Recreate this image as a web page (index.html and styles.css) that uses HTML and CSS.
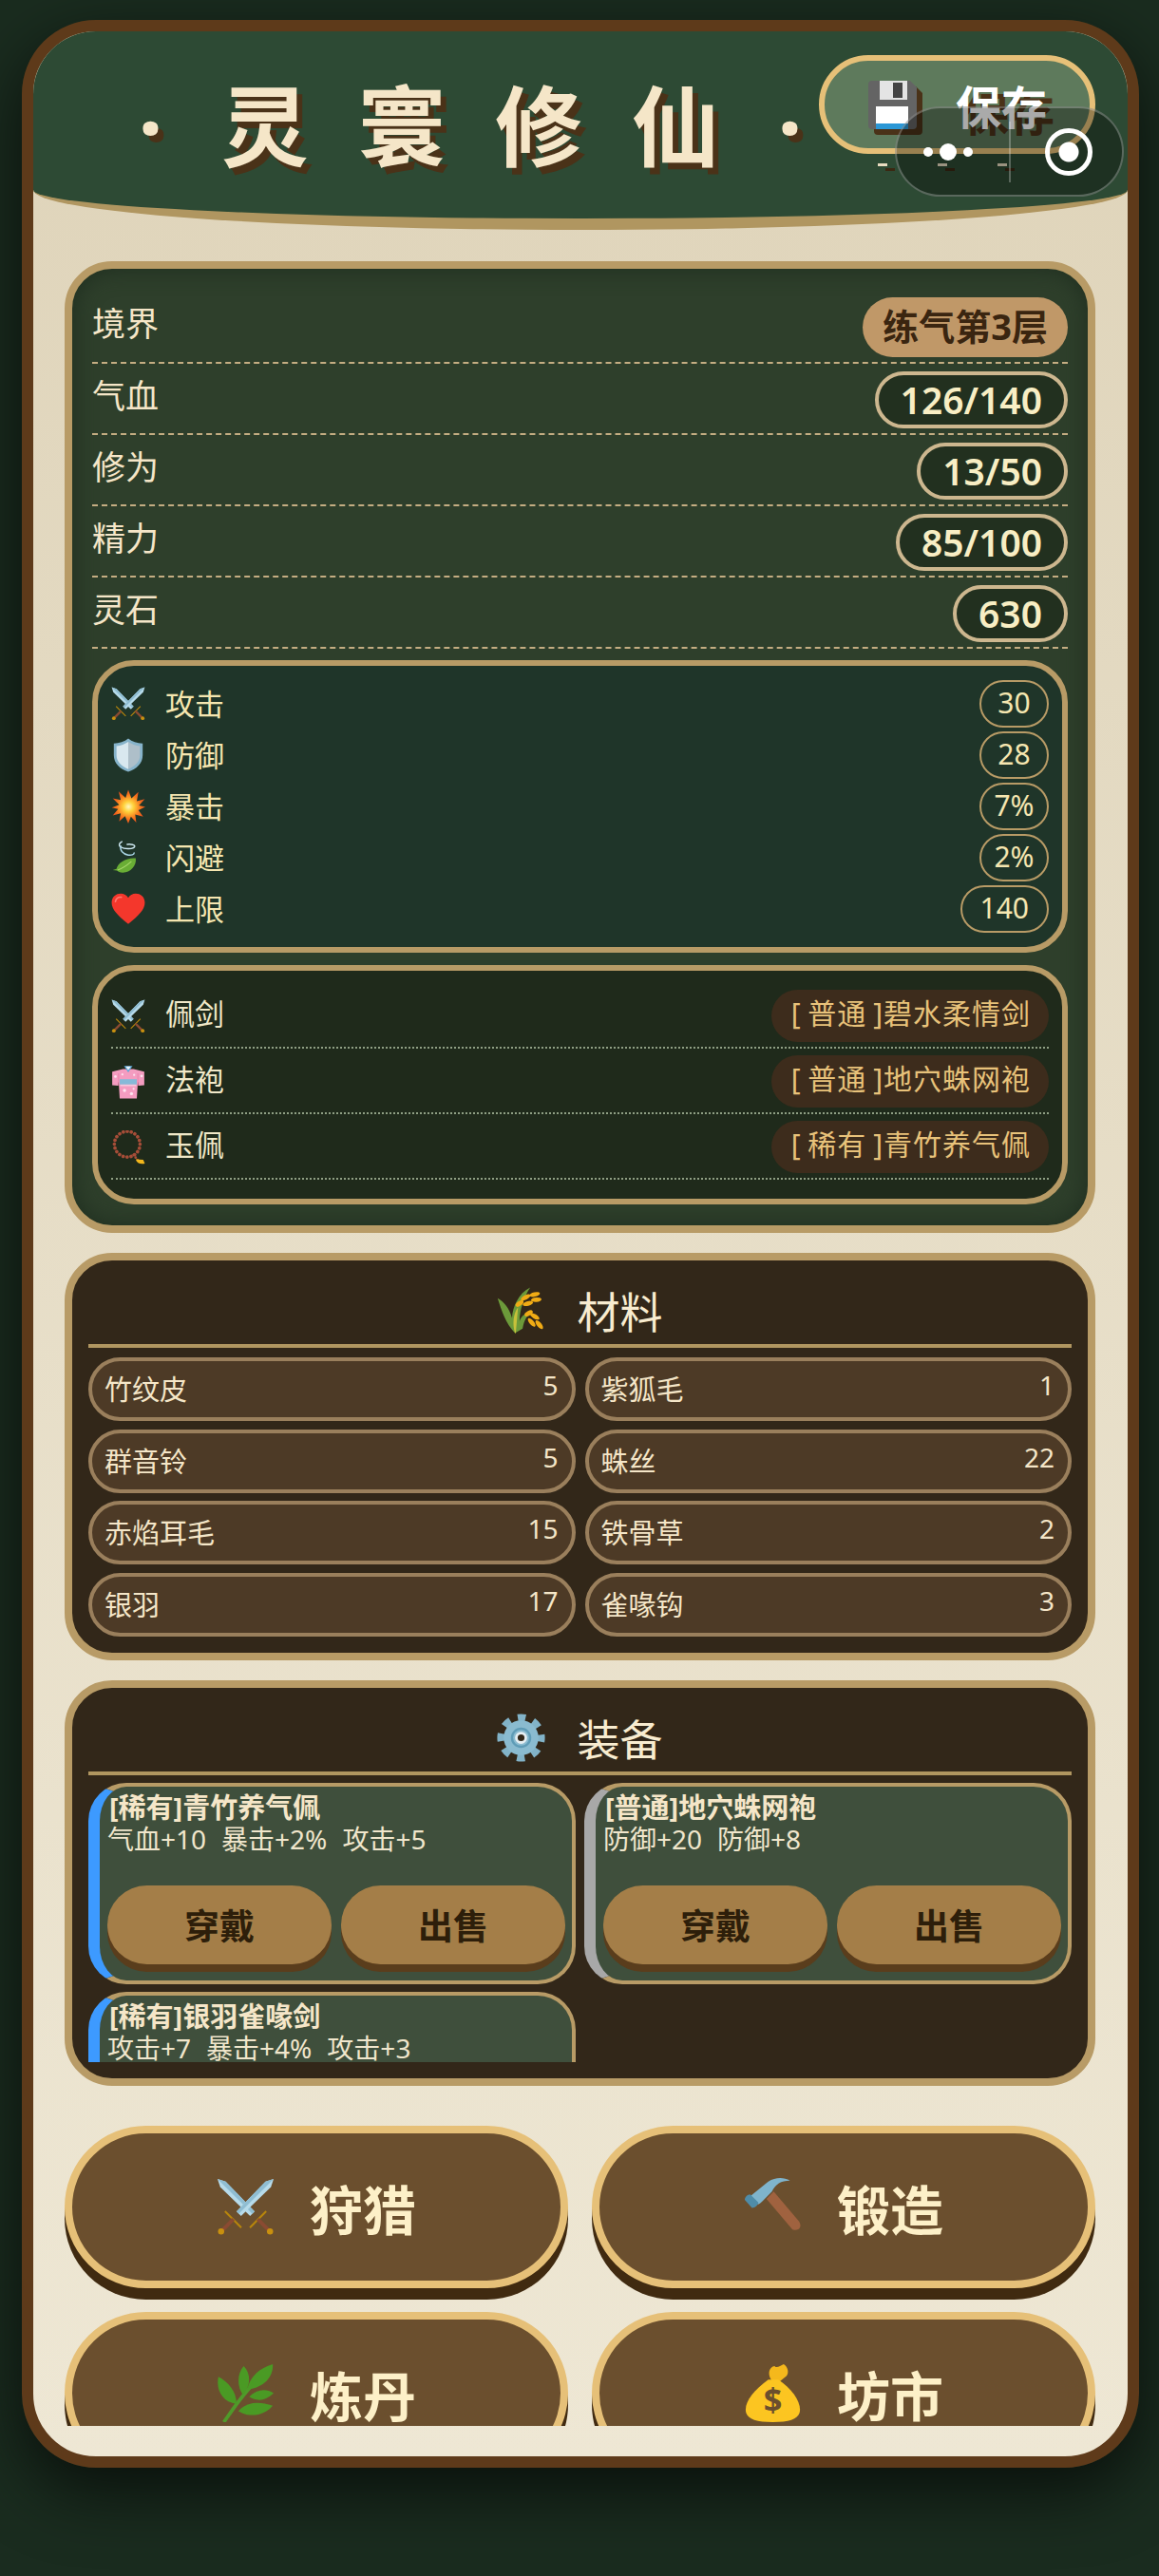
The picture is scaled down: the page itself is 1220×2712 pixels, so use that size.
FILE: index.html
```html
<!DOCTYPE html>
<html lang="zh-CN">
<head>
  <meta charset="UTF-8">
  <title>灵寰修仙</title>
  <link rel="stylesheet" href="styles.css">
</head>
<body>
  <svg class="sprites" width="0" height="0">
    <defs>
      <radialGradient id="boom">
        <stop offset="0" stop-color="#fff6c0"/>
        <stop offset=".3" stop-color="#ffd23c"/>
        <stop offset=".7" stop-color="#f7791e"/>
        <stop offset="1" stop-color="#e8501a"/>
      </radialGradient>
      <symbol id="i-swords" viewBox="0 0 64 64">
        <g id="sword-a">
          <path d="M1 1l9 3 32 33-5 5L4 10z" fill="#b7dbea"/>
          <path d="M1 1l9 3 32 33-2.500 2.500z" fill="#8fbdd2"/>
          <path d="M36 54l18-18 1.500 1.500-18 18z" fill="#b8860b"/>
          <path d="M44 47l3-3 12 12-3 3z" fill="#8a4b32"/>
          <circle cx="59" cy="59" r="3.400" fill="#c8900f"/>
        </g>
        <use href="#sword-a" transform="translate(64 0) scale(-1 1)"/>
      </symbol>
      <symbol id="i-shield" viewBox="0 0 64 64">
        <path d="M32 1C25 7 15 10 5 10v22c0 15 11 26 27 31 16-5 27-16 27-31V10C49 10 39 7 32 1z" fill="#86b3ca"/>
        <path d="M32 7C26 11 18 14 10 15v17c0 12 9 21 22 26z" fill="#d9e8ef"/>
        <path d="M32 7c6 4 14 7 22 8v17c0 12-9 21-22 26z" fill="#aebfc9"/>
      </symbol>
      <symbol id="i-boom" viewBox="0 0 64 64">
        <path d="M32 1l6 16 13-12-3 17 15-4-11 12 12 3-13 6 9 12-15-4 2 15-10-11-5 13-6-14-11 10 3-15-15 4 10-12L1 34l14-5L3 17l15 3-4-16 13 12z" fill="url(#boom)"/>
      </symbol>
      <symbol id="i-leaf" viewBox="0 0 64 64">
        <path d="M20 2c-6 3-6 8-2 10 8 5 24 4 26-1 1-3-7-5-14-4" fill="none" stroke="#cfe9f2" stroke-width="2.600" stroke-linecap="round"/>
        <path d="M18 10c-2 8 4 15 14 17 6 1 11-1 11-4" fill="none" stroke="#a9d6e6" stroke-width="2.600" stroke-linecap="round"/>
        <path d="M46 33c2 14-10 27-24 27-6 0-9-2-11-4l-8-1 7-2c2-12 20-22 36-20z" fill="#69ad35"/>
        <path d="M12 55c8-2 18-9 26-16" fill="none" stroke="#a6d76b" stroke-width="2"/>
      </symbol>
      <symbol id="i-heart" viewBox="0 0 64 64">
        <path d="M32 60C12 44 1 33 1 20 1 9 9 3 18 3c6 0 11 3 14 8 3-5 8-8 14-8 9 0 17 6 17 17 0 13-11 24-31 40z" fill="#f4372c"/>
        <path d="M8 18c1-6 6-9 11-8" fill="none" stroke="#ff7a70" stroke-width="3" stroke-linecap="round"/>
      </symbol>
      <symbol id="i-robe" viewBox="0 0 64 64">
        <path d="M22 8L2 13v25l11 1 1-8 2 32h32l2-32 1 8 11-1V13L42 8z" fill="#f49cc0"/>
        <path d="M14 16v23M50 16v23" stroke="#e77fa9" stroke-width="1.500"/>
        <path d="M24 2h16l-8 12z" fill="#5aa6d6"/>
        <path d="M27 3h10l-5 7z" fill="#e8f4fb"/>
        <path d="M16 27h32v10H16z" fill="#86b9d8"/>
        <path d="M17 37h30v3H17z" fill="#f7c8dc"/>
        <g fill="#fde4ef"><circle cx="8" cy="22" r="2.500"/><circle cx="57" cy="21" r="2.500"/><circle cx="25" cy="48" r="3"/><circle cx="38" cy="54" r="3"/><circle cx="42" cy="45" r="2"/><circle cx="21" cy="18" r="2"/><circle cx="43" cy="19" r="2"/></g>
      </symbol>
      <symbol id="i-beads" viewBox="0 0 64 64">
        <circle cx="30" cy="26" r="24" fill="none" stroke="#a64d38" stroke-width="6.500" stroke-linecap="round" stroke-dasharray=".1 7.400"/>
        <path d="M42 46l8 10" stroke="#a64d38" stroke-width="5" stroke-linecap="round" stroke-dasharray=".1 6"/>
        <path d="M46 54l14 1 3 7c-7 2-15 0-17-8z" fill="#f2b71c"/>
      </symbol>
      <symbol id="i-rice" viewBox="0 0 64 64">
        <path d="M24 62C12 50 6 32 1 16c8 4 16 14 19 26 1-14 8-32 24-40-8 12-14 30-14 44 3-8 10-12 14-8-5 1-8 8-10 18z" fill="#6c9a3a"/>
        <path d="M24 62c-4-12-2-26 4-34l-3 34z" fill="#c6c13a"/>
        <g fill="#f0ab15"><ellipse cx="50" cy="11" rx="7" ry="3" transform="rotate(-12 50 11)"/><ellipse cx="38" cy="15" rx="7" ry="3" transform="rotate(-28 38 15)"/><ellipse cx="52" cy="18" rx="7" ry="3" transform="rotate(-5 52 18)"/><ellipse cx="41" cy="23" rx="7" ry="3" transform="rotate(-15 41 23)"/><ellipse cx="30" cy="23" rx="6" ry="3" transform="rotate(-35 30 23)"/><ellipse cx="42" cy="36" rx="6" ry="3" transform="rotate(-30 42 36)"/><ellipse cx="50" cy="40" rx="7" ry="3" transform="rotate(30 50 40)"/><ellipse cx="56" cy="51" rx="7" ry="3" transform="rotate(50 56 51)"/><ellipse cx="46" cy="48" rx="7" ry="3" transform="rotate(50 46 48)"/></g>
      </symbol>
      <symbol id="i-gear" viewBox="0 0 64 64">
        <circle cx="32" cy="32" r="26" fill="none" stroke="#82b3c8" stroke-width="11" stroke-dasharray="10.200 10.200" stroke-dashoffset="5"/>
        <circle cx="32" cy="32" r="23" fill="#8abbd0"/>
        <circle cx="32" cy="32" r="12" fill="none" stroke="#5f9cb7" stroke-width="3"/>
        <circle cx="32" cy="32" r="8" fill="#e6eef2"/>
        <circle cx="32" cy="32" r="4.500" fill="#322719"/>
      </symbol>
      <symbol id="i-hammer" viewBox="0 0 64 64">
        <path d="M25 23l8-8 28 33c2 3 2 6 0 8-3 2-6 2-8 0z" fill="#a0623f"/>
        <path d="M6 21L27 4c8-5 17-5 24-1-10 0-16 4-20 12l-9 9c-3 3-5 5-7 5z" fill="#7fb4cc"/>
        <path d="M1 24c0-3 3-6 6-6l9 9c0 3-4 6-7 6z" fill="#4f8ca8"/>
      </symbol>
      <symbol id="i-herb" viewBox="0 0 64 64">
        <path d="M8 64c10-14 20-30 36-46" fill="none" stroke="#4f9a2a" stroke-width="4"/>
        <g fill="#4a9a24">
          <path d="M22 44C6 42-1 28 2 14c11 6 20 16 20 30z"/>
          <path d="M29 34C22 24 23 10 30 2c8 8 8 22-1 32z"/>
          <path d="M34 28C36 14 48 4 62 0c1 14-10 26-28 28z"/>
          <path d="M36 36c8-8 18-10 27-4-8 8-18 10-27 4z"/>
          <path d="M24 52c8-10 22-12 38-6-8 10-24 14-38 6z"/>
        </g>
      </symbol>
      <symbol id="i-bag" viewBox="0 0 64 64">
        <path d="M30 17C26 10 28 3 34 2c2 3 6 0 10-2 5 3 6 10 3 13l-11 9z" fill="#f5b81c"/>
        <path d="M27 17C12 28 2 40 2 50c0 10 10 14 30 14s30-4 30-14c0-10-10-24-24-33z" fill="#fcc521"/>
        <text class="bag-mark" x="32" y="52" text-anchor="middle">$</text>
      </symbol>
      <symbol id="i-floppy" viewBox="0 0 51 51">
        <path d="M4 0h40l7 7v40a4 4 0 0 1-4 4H4a4 4 0 0 1-4-4V4a4 4 0 0 1 4-4z" fill="#646464"/>
        <path d="M12 0h29v20H12z" fill="#e4e4e4"/>
        <path d="M26 2h10v16H26z" fill="#444"/>
        <path d="M8 27h34v18H8z" fill="#fff"/>
        <path d="M8 45h34v6H8z" fill="#2b97d6"/>
      </symbol>
    </defs>
  </svg>

  <div class="frame">
    <header class="top">
      <h1 class="game-title"><span class="dot">·</span><span>灵</span><span>寰</span><span>修</span><span>仙</span><span class="dot">·</span></h1>
      <button class="save-btn"><svg class="floppy"><use href="#i-floppy"/></svg><span>保存</span></button>
      <div class="ticks"><i></i><i></i><i></i></div>
    </header>

    <main class="content">
      <section class="panel status">
        <div class="stat-row"><span class="stat-label">境界</span><span class="realm">练气第3层</span></div>
        <div class="stat-row"><span class="stat-label">气血</span><span class="stat-val">126/140</span></div>
        <div class="stat-row"><span class="stat-label">修为</span><span class="stat-val">13/50</span></div>
        <div class="stat-row"><span class="stat-label">精力</span><span class="stat-val">85/100</span></div>
        <div class="stat-row"><span class="stat-label">灵石</span><span class="stat-val">630</span></div>

        <div class="attrs">
          <div class="attr"><svg class="ico"><use href="#i-swords"/></svg><span class="attr-name">攻击</span><span class="attr-val">30</span></div>
          <div class="attr"><svg class="ico"><use href="#i-shield"/></svg><span class="attr-name">防御</span><span class="attr-val">28</span></div>
          <div class="attr"><svg class="ico"><use href="#i-boom"/></svg><span class="attr-name">暴击</span><span class="attr-val">7%</span></div>
          <div class="attr"><svg class="ico"><use href="#i-leaf"/></svg><span class="attr-name">闪避</span><span class="attr-val">2%</span></div>
          <div class="attr"><svg class="ico"><use href="#i-heart"/></svg><span class="attr-name">上限</span><span class="attr-val long">140</span></div>
        </div>

        <div class="worn">
          <div class="slot"><svg class="ico"><use href="#i-swords"/></svg><span class="slot-name">佩剑</span><span class="slot-val">[ 普通 ]碧水柔情剑</span></div>
          <div class="slot"><svg class="ico"><use href="#i-robe"/></svg><span class="slot-name">法袍</span><span class="slot-val">[ 普通 ]地穴蛛网袍</span></div>
          <div class="slot"><svg class="ico"><use href="#i-beads"/></svg><span class="slot-name">玉佩</span><span class="slot-val">[ 稀有 ]青竹养气佩</span></div>
        </div>
      </section>

      <section class="panel store">
        <h2 class="store-title"><svg class="title-ico"><use href="#i-rice"/></svg>材料</h2>
        <div class="mat-grid">
          <div class="mat"><span>竹纹皮</span><span class="mat-num">5</span></div>
          <div class="mat"><span>紫狐毛</span><span class="mat-num">1</span></div>
          <div class="mat"><span>群音铃</span><span class="mat-num">5</span></div>
          <div class="mat"><span>蛛丝</span><span class="mat-num">22</span></div>
          <div class="mat"><span>赤焰耳毛</span><span class="mat-num">15</span></div>
          <div class="mat"><span>铁骨草</span><span class="mat-num">2</span></div>
          <div class="mat"><span>银羽</span><span class="mat-num">17</span></div>
          <div class="mat"><span>雀喙钩</span><span class="mat-num">3</span></div>
        </div>
      </section>

      <section class="panel store">
        <h2 class="store-title"><svg class="title-ico"><use href="#i-gear"/></svg>装备</h2>
        <div class="equip-list">
          <div class="equip rare">
            <div class="equip-name">[稀有]青竹养气佩</div>
            <div class="equip-stats"><span>气血+10</span><span>暴击+2%</span><span>攻击+5</span></div>
            <div class="equip-btns"><button class="small-btn">穿戴</button><button class="small-btn">出售</button></div>
          </div>
          <div class="equip common">
            <div class="equip-name">[普通]地穴蛛网袍</div>
            <div class="equip-stats"><span>防御+20</span><span>防御+8</span></div>
            <div class="equip-btns"><button class="small-btn">穿戴</button><button class="small-btn">出售</button></div>
          </div>
          <div class="equip rare">
            <div class="equip-name">[稀有]银羽雀喙剑</div>
            <div class="equip-stats"><span>攻击+7</span><span>暴击+4%</span><span>攻击+3</span></div>
            <div class="equip-btns"><button class="small-btn">穿戴</button><button class="small-btn">出售</button></div>
          </div>
        </div>
      </section>

      <div class="actions">
        <button class="action-btn"><svg class="action-ico"><use href="#i-swords"/></svg>狩猎</button>
        <button class="action-btn"><svg class="action-ico"><use href="#i-hammer"/></svg>锻造</button>
        <button class="action-btn"><svg class="action-ico"><use href="#i-herb"/></svg>炼丹</button>
        <button class="action-btn"><svg class="action-ico"><use href="#i-bag"/></svg>坊市</button>
      </div>
    </main>
  </div>

  <div class="capsule">
    <span class="cap-dots"><i></i><i></i><i></i></span>
    <span class="cap-line"></span>
    <span class="cap-target"></span>
  </div>
</body>
</html>
```

FILE: styles.css
```css
* { box-sizing: border-box; }
html, body { margin: 0; height: 2712px; overflow: hidden; }
body { padding: 21px 21px 0 23px; background: #1a2c1f; font-family: "Noto Sans", "Noto Sans CJK SC", sans-serif; color: #f5e6c8; }
button { font-family: inherit; border: 0; padding: 0; }
.sprites { position: absolute; }
.bag-mark { font-size: 36px; font-weight: 700; fill: #6b4f2e; font-family: "Noto Sans", sans-serif; }

.frame { height: 2577px; border: 12px solid #5e3a1a; border-radius: 78px; overflow: hidden; background: linear-gradient(#dfd4ba, #eee7d4); box-shadow: 0 24px 70px #000a; }

.top { position: relative; height: 209px; background: #2d4a34; border-bottom: 12px solid #b09660; border-radius: 0 0 50% 50% / 0 0 42px 42px; }
.game-title { display: flex; margin: 0; padding: 43px 0 0 75px; font-size: 92px; line-height: 114px; font-weight: 700; color: #f5e6c8; text-shadow: 6px 7px 0 #4a3218; }
.game-title span { width: 144px; text-align: center; }
.game-title .dot { width: 97px; }
.save-btn { position: absolute; left: 827px; top: 25px; width: 291px; height: 104px; display: flex; align-items: center; padding-left: 46px; gap: 41px; background: #5e7a5c; border: 6px solid #e6c078; border-radius: 52px; color: #fff; font-size: 48px; font-weight: 700; text-shadow: 8px 7px 0 #4a3218; }
.floppy { width: 51px; height: 51px; filter: drop-shadow(6px 6px 0 #4a3218); }
.ticks { position: absolute; left: 889px; top: 139px; display: flex; gap: 53px; }
.ticks i { width: 10px; height: 3px; background: #e8dcc0; box-shadow: 8px 5px 0 #3a2812; }

.content { padding: 33px 34px 0 33px; }
.panel { border: 8px solid #b89b66; border-radius: 50px; }
.panel + .panel { margin-top: 21px; }

.status { height: 1023px; padding: 22px 21px 0; background: #2e3f2b; box-shadow: inset 0 0 24px #1f2e1f; }
.stat-row { display: flex; justify-content: space-between; align-items: center; padding: 8px 0 5px; border-bottom: 2px dashed #c4ad82; }
.stat-label { font-size: 35px; line-height: 44px; margin-top: -8px; color: #f5e6c8; }
.realm { height: 63px; padding: 0 21px; font-size: 38px; line-height: 60px; font-weight: 700; color: #3a2510; background: #c09868; border-radius: 32px; }
.stat-val { height: 60px; padding: 0 23px; font-size: 39px; line-height: 51px; font-weight: 600; color: #f8eec4; background: #22301f; border: 4px solid #cdb78f; border-radius: 30px; }

.attrs { margin-top: 12px; padding: 13px 14px; background: #1f3529; border: 6px solid #b89b66; border-radius: 44px; }
.attr { display: flex; align-items: center; height: 54px; }
.ico { width: 36px; height: 36px; flex: none; }
.attr-name { margin: -3px 0 0 21px; flex: 1; font-size: 31px; color: #f5e6b0; }
.attr-val { height: 50px; min-width: 73px; padding: 0 13px; text-align: center; font-size: 30px; line-height: 44px; color: #f5e6b0; border: 2px solid #b89b66; border-radius: 25px; }
.attr-val.long { padding: 0 19px; }

.worn { margin-top: 13px; padding: 13px 14px 20px; background: #1f2a1b; border: 6px solid #b89b66; border-radius: 44px; }
.slot { display: flex; align-items: center; padding: 7px 0 5px; border-bottom: 2px dotted #8f9f84; }
.slot-name { margin: -9px 0 0 21px; flex: 1; font-size: 31px; color: #f0e8c8; }
.slot-val { height: 55px; padding: 0 19px 0 21px; font-size: 30px; line-height: 50px; letter-spacing: 1px; word-spacing: -2px; color: #e8c27a; background: #3d2c1c; border-radius: 28px; }

.store { padding: 0 17px 17px; background: #322719; }
.store-title { display: flex; justify-content: center; align-items: center; gap: 33px; height: 92px; margin: 0; padding-top: 17px; font-size: 45px; font-weight: 400; color: #f8ecd0; border-bottom: 4px solid #b09660; }
.title-ico { width: 51px; height: 51px; }

.mat-grid { display: grid; grid-template-columns: 1fr 1fr; gap: 8.5px 10px; margin-top: 10px; }
.mat { display: flex; justify-content: space-between; height: 67px; padding: 0 14px 0 13px; font-size: 29px; line-height: 60px; color: #f5e6c8; background: #4d3a26; border: 4px solid #9a7f5c; border-radius: 34px; }
.mat-num { font-size: 28px; line-height: 50px; }

.equip-list { display: grid; grid-template-columns: 1fr 1fr; gap: 8px 9px; height: 294px; margin-top: 8px; overflow: hidden; align-content: start; }
.equip { height: 212px; padding: 4px 4px 0 8px; background: #3f4f3c; border: 4px solid #b89b66; border-radius: 40px; }
.equip.rare { border-left: 12px solid #3d9aff; }
.equip.common { border-left: 12px solid #a8a8a8; }
.equip-name { padding-left: 2px; font-size: 29px; line-height: 36px; font-weight: 700; color: #f5e6c8; }
.equip-stats { display: flex; gap: 16px; font-size: 28px; line-height: 30px; color: #f0e6cc; }
.equip-btns { display: flex; gap: 10px; margin-top: 34px; }
.small-btn { width: 236px; height: 83px; font-size: 37px; font-weight: 700; color: #2d1e0a; background: #a47e48; border-radius: 42px; box-shadow: 0 8px 0 #5a3d1c; }

.actions { display: grid; grid-template-columns: 530px 530px; gap: 25px; height: 316px; margin-top: 42px; overflow: hidden; align-content: start; }
.action-btn { display: flex; justify-content: center; align-items: center; gap: 37px; height: 171px; font-size: 56px; font-weight: 700; color: #fdf0c8; background: #6b4f2e; border: 8px solid #e6c078; border-radius: 86px; box-shadow: 0 12px 0 #402a10; }
.action-ico { width: 61px; height: 61px; }

/* 小程序胶囊,盖在页面最上层 */
.capsule { position: absolute; left: 942px; top: 112px; width: 241px; height: 95px; display: flex; align-items: center; background: #0005; border: 2px solid #fff4; border-radius: 48px; }
.cap-dots { display: flex; align-items: center; gap: 7px; margin-left: 28px; }
.cap-dots i { width: 10px; height: 10px; border-radius: 50%; background: #fff; }
.cap-dots i:nth-child(2) { width: 18px; height: 18px; }
.cap-line { width: 2px; height: 64px; margin: 0 0 0 38px; background: #fff4; }
.cap-target { width: 50px; height: 50px; margin-left: 36px; border: 5px solid #fff; border-radius: 50%; background: radial-gradient(circle, #fff 10px, transparent 11px); }
```
